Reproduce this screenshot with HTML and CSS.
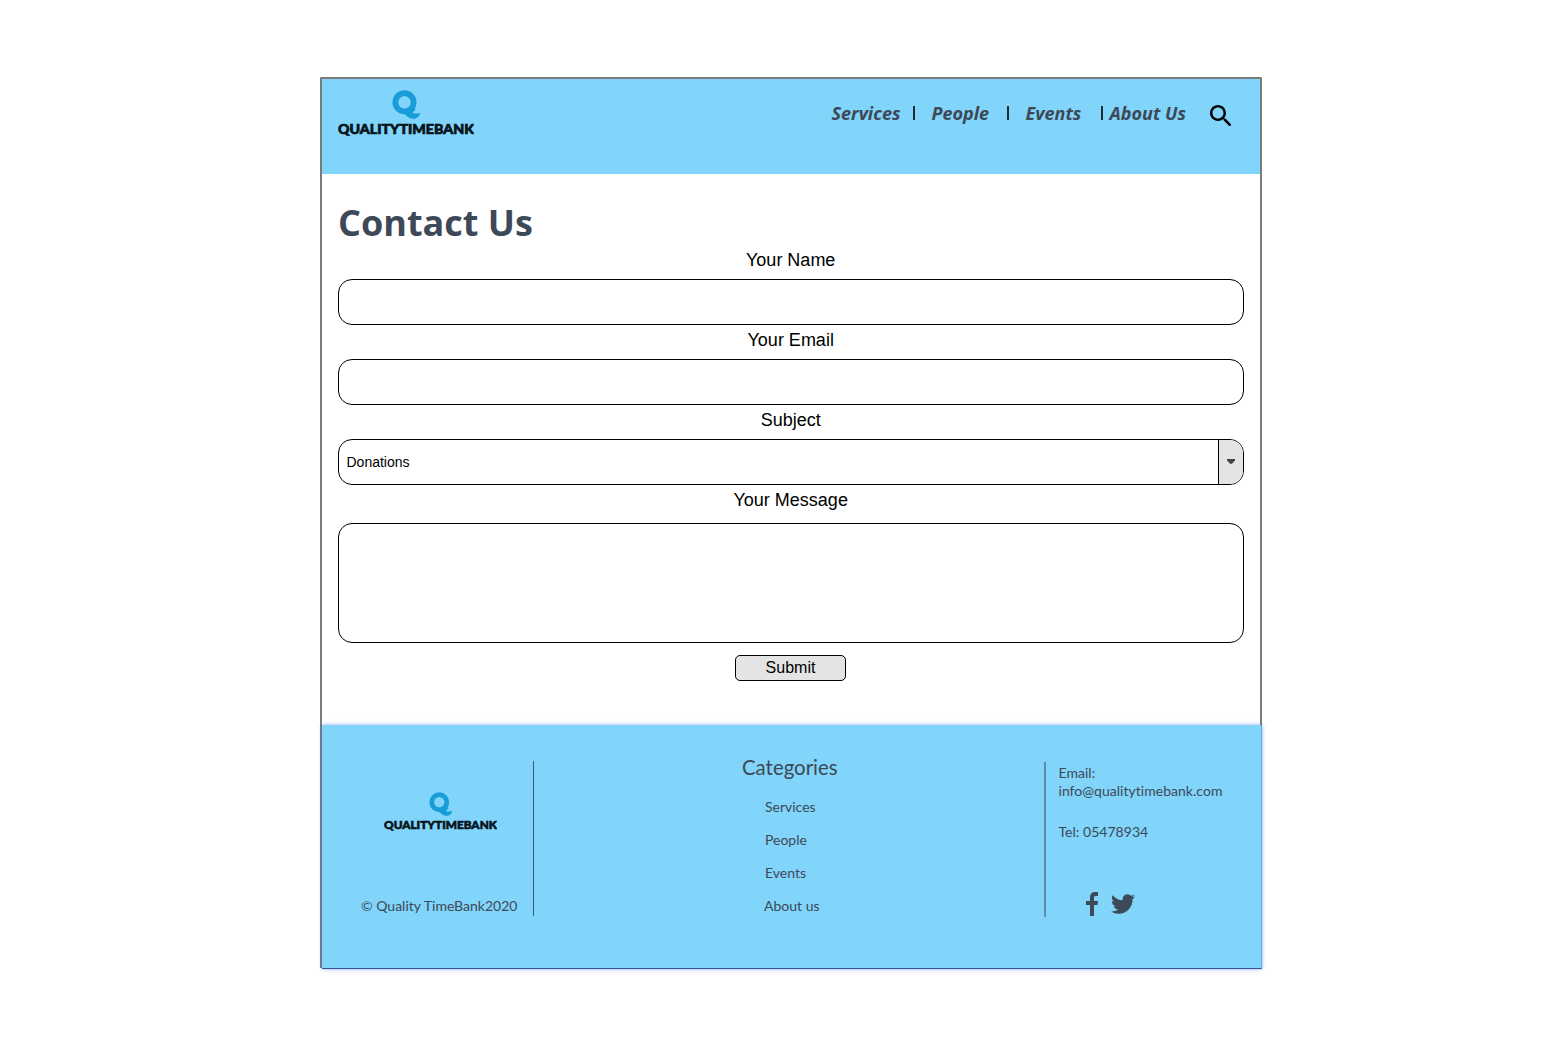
FILE: index.html
```html
<!DOCTYPE html>
<html lang="en">
<head>
<meta charset="utf-8">
<title>Contact Us - Quality TimeBank</title>
<link rel="stylesheet" href="styles.css">
</head>
<body>
<svg class="defs" aria-hidden="true">
  <symbol id="logo" viewBox="0 0 136 47">
    <circle cx="66.500" cy="12.300" r="9.100" fill="none" stroke="#199dd9" stroke-width="5.800"/>
    <path d="M61 20.500c5-.5 9 .7 13 2.300c2.500 1 4.800 1 8.200-.1c-.6 3.700-3 6-7 6c-5 0-6.500-4-14.200-8.200z" fill="#199dd9"/>
    <path d="M66 23.500c4-1.500 7-4 9.500-7l2 3l-5 5.500z" fill="#199dd9"/>
    <text x="0" y="44.400" textLength="136" lengthAdjust="spacingAndGlyphs" class="logo-text">QUALITYTIMEBANK</text>
  </symbol>
</svg>
<div class="page">
  <header class="header">
    <svg class="logo" viewBox="0 0 136 47"><use href="#logo"/></svg>
    <nav class="nav">
      <a>Services</a><i class="sep"></i>
      <a>People</a><i class="sep"></i>
      <a>Events</a><i class="sep"></i>
      <a>About Us</a>
    </nav>
    <svg class="search" viewBox="3 3 17.500 17.500"><path d="M15.500 14h-.79l-.28-.27C15.410 12.590 16 11.110 16 9.500 16 5.910 13.090 3 9.500 3S3 5.910 3 9.500 5.910 16 9.500 16c1.610 0 3.090-.59 4.230-1.570l.27.28v.79l5 4.990L20.490 19l-4.990-5zm-6 0C7.010 14 5 11.990 5 9.500S7.010 5 9.500 5 14 7.010 14 9.500 11.990 14 9.500 14z"/></svg>
  </header>
  <main class="main">
    <h1>Contact Us</h1>
    <form class="form">
      <label for="name">Your Name</label>
      <input id="name" class="field" type="text">
      <label for="email">Your Email</label>
      <input id="email" class="field" type="text">
      <label>Subject</label>
      <div class="field select"><span>Donations</span><b class="arrow"><svg viewBox="0 0 8 5"><path d="M0 0h8v1.200L5 4.800H3L0 1.200z"/></svg></b></div>
      <label for="message">Your Message</label>
      <textarea id="message" class="field message"></textarea>
      <button type="button" class="submit">Submit</button>
    </form>
  </main>
  <footer class="footer">
    <section class="brand">
      <svg class="logo-small" viewBox="0 0 136 47"><use href="#logo"/></svg>
      <p>© Quality TimeBank2020</p>
    </section>
    <section class="categories">
      <h2>Categories</h2>
      <ul><li>Services</li><li>People</li><li>Events</li><li class="about">About us</li></ul>
    </section>
    <section class="contact">
      <p>Email:<br>info@qualitytimebank.com</p>
      <p class="tel">Tel: 05478934</p>
      <div class="social">
        <svg class="fb" viewBox="0 0 12 24"><path d="M12 .2V4H9.700C8.300 4 8 4.700 8 5.800V9h4l-.5 4H8v11H4V13H0V9h4V5.300C4 1.900 6 0 9 0c1.400 0 2.600.1 3 .2z"/></svg>
        <svg class="tw" viewBox="0 2 24 20"><path d="M23.953 4.570a10 10 0 01-2.825.775 4.958 4.958 0 002.163-2.723c-.951.555-2.005.959-3.127 1.184a4.920 4.920 0 00-8.384 4.482C7.690 8.095 4.067 6.130 1.640 3.162a4.822 4.822 0 00-.666 2.475c0 1.710.87 3.213 2.188 4.096a4.904 4.904 0 01-2.228-.616v.06a4.923 4.923 0 003.946 4.827 4.996 4.996 0 01-2.212.085 4.936 4.936 0 004.604 3.417 9.867 9.867 0 01-6.102 2.105c-.39 0-.779-.023-1.170-.067a13.995 13.995 0 007.557 2.209c9.053 0 13.998-7.496 13.998-13.985 0-.21 0-.42-.015-.63A9.935 9.935 0 0024 4.590z"/></svg>
      </div>
    </section>
  </footer>
</div>
</body>
</html>
```
FILE: styles.css
```css
* { box-sizing: border-box; }
body { margin: 0; min-height: 1054px; padding: 77px 0 0 320px; background: #fff; font-family: "Liberation Sans", Arial, sans-serif; }
h1, h2, p, ul { margin: 0; padding: 0; }
.defs { display: none; }
.page {
  width: 942px;
  height: 891px;
  border: 2px solid #7b7b7b;
  border-bottom: 0;
  border-radius: 2px 2px 0 0;
}
.header {
  display: flex;
  align-items: flex-start;
  height: 95px;
  padding: 11px 0 0 16px;
  background: #81d4fa;
}
.logo { width: 136px; height: 47px; flex: none; }
.logo-text { font: 900 13.500px Lato, sans-serif; fill: #06131a; stroke: #06131a; stroke-width: .7px; }
.nav {
  display: grid;
  grid-template-columns: 81.500px 18.500px 75.500px 18.500px 75px 9px 100px;
  align-items: center;
  height: 24px;
  margin: 11px 0 0 357.500px;
  font: italic 700 18px/24px "Open Sans", sans-serif;
  color: #3d4957;
  white-space: nowrap;
}
.sep { width: 2px; height: 14px; background: #1c2a33; }
.search { width: 21.500px; height: 21.500px; margin-top: 14.500px; }
.main { height: 551px; padding: 24px 16px 0; }
h1 { font: 700 36px/49px "Open Sans", sans-serif; color: #3d4957; }
.form { display: flex; flex-direction: column; align-items: center; margin-top: -2px; }
label { height: 34px; padding-right: .6px; font-size: 18px; line-height: 31px; }
.field {
  width: 906px;
  height: 46px;
  border: 1px solid #000;
  border-radius: 14px;
  background: #fff;
  outline: 0;
}
.select { display: flex; align-items: center; justify-content: space-between; padding-left: 7.500px; font-size: 14px; overflow: hidden; }
.arrow { display: flex; align-items: center; justify-content: center; width: 25px; height: 44px; border-left: 1px solid #000; background: #e4e4e4; }
.arrow svg { width: 8px; height: 5px; margin-bottom: 1px; fill: #444; }
.message { height: 120px; margin-top: 4px; resize: none; }
.submit { width: 111px; height: 26px; margin: 12px 1px 0 0; padding: 0 0 1px; border: 1px solid #000; border-radius: 5px; background: #e4e4e4; font: 16px "Liberation Sans", Arial, sans-serif; color: #000; }
.footer {
  display: flex;
  align-items: flex-start;
  width: 940px;
  height: 244px;
  padding-top: 35.500px;
  background: #81d4fa;
  border-right: 1px solid #6ba5e0;
  border-bottom: 1px solid #2f5597;
  box-shadow: 0 0 4px rgba(68, 114, 255, .6);
  font: 14px/18px Lato, sans-serif;
  color: #3d4957;
}
.brand { width: 212px; height: 155px; padding: 31.500px 0 0 39px; border-right: 1px solid #3d5a70; white-space: nowrap; }
.logo-small { display: block; width: 113px; height: 39px; margin-left: 22.500px; }
.brand p { margin-top: 66px; }
.categories { width: 510px; padding-left: 208px; }
h2 { font-size: 20.400px; line-height: 24px; margin-top: -5.500px; font-weight: 400; }
ul { margin: 11px 0 0 23px; list-style: none; line-height: 33px; }
.about { margin-left: -1px; }
.contact { height: 155px; margin-top: 1px; padding: 2.500px 0 0 12.500px; border-left: 2px solid #5f8ba5; font-variant-ligatures: none; letter-spacing: .03px; }
.tel { margin-top: 23px; }
.social { display: flex; align-items: center; gap: 12.500px; margin: 50.500px 0 0 27.500px; fill: #3d4957; }
.fb { width: 12px; height: 24px; }
.tw { width: 24px; height: 20px; }
```
